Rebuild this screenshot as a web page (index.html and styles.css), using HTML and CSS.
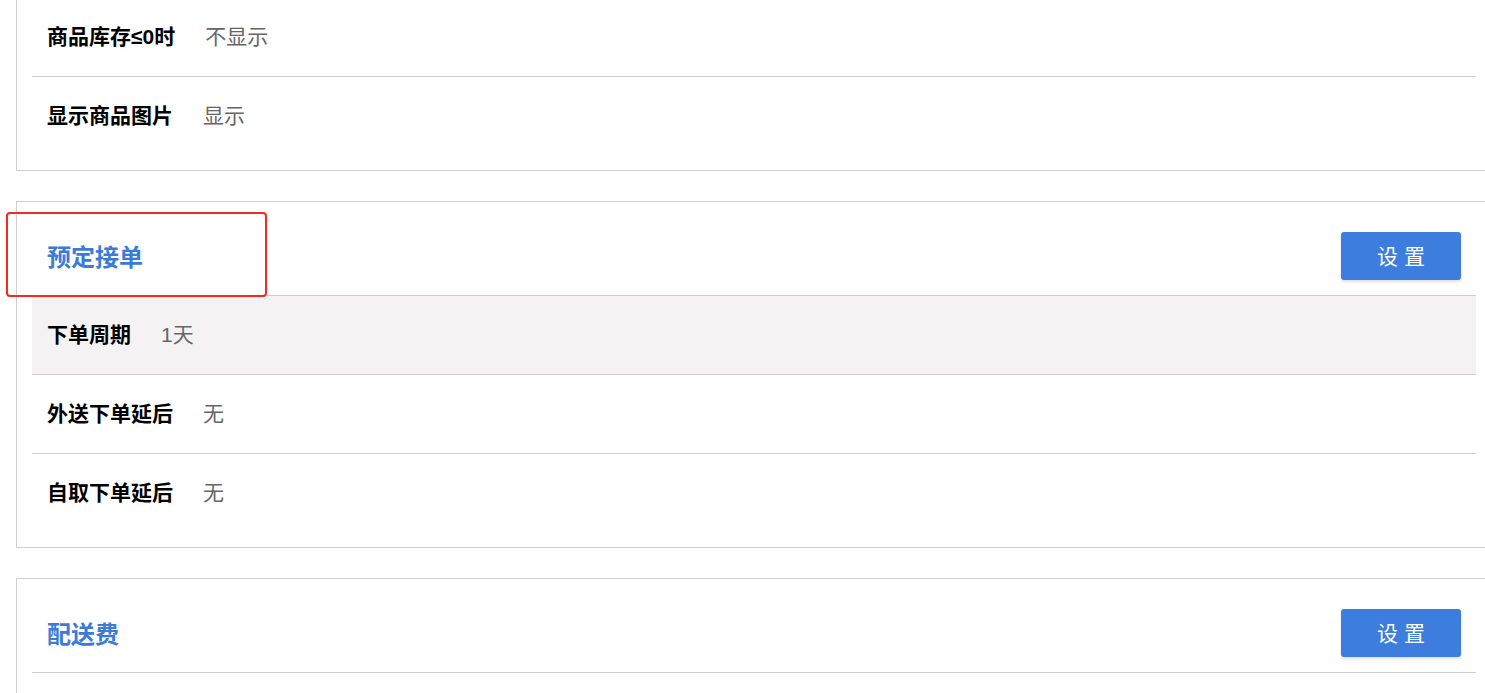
FILE: index.html
```html
<!DOCTYPE html>
<html><head>
<meta charset="utf-8">
<title>店铺设置</title>
<link rel="stylesheet" href="styles.css">
</head>
<body>
<div class="page">
	<div class="card cut">
		<div class="row"><span class="label">商品库存≤0时</span><span class="value">不显示</span></div>
		<div class="row"><span class="label">显示商品图片</span><span class="value">显示</span></div>
	</div>

	<div class="card">
		<div class="mark"></div>
		<div class="head">
			<span class="title">预定接单</span>
			<button class="btn">设置</button>
		</div>
		<div class="row grey"><span class="label">下单周期</span><span class="value">1天</span></div>
		<div class="row"><span class="label">外送下单延后</span><span class="value">无</span></div>
		<div class="row"><span class="label">自取下单延后</span><span class="value">无</span></div>
	</div>

	<div class="card">
		<div class="head">
			<span class="title">配送费</span>
			<button class="btn">设置</button>
		</div>
		<div class="row"></div>
	</div>
</div>
</body>
</html>
```

FILE: styles.css
```css
body {
    margin: 0;
    background: #fff;
    font-family: "Liberation Sans", "Noto Sans CJK SC", sans-serif;
    overflow: hidden;
}
.page {
    padding: 0 0 0 16px;
    width: 1476px;
}
.card {
    position: relative;
    border: 1px solid #cfcfcf;
    padding: 15px;
    margin-bottom: 30px;
    background: #fff;
}
/* верх первой карточки уехал за край экрана */
.card.cut {
    border-top: none;
    padding-top: 0;
    margin-top: -2px;
}
.head {
    display: flex;
    align-items: center;
    justify-content: space-between;
    padding: 15px;
    border-bottom: 1px solid #cfcfcf;
}
.title {
    font-size: 24px;
    font-weight: bold;
    color: #3b7bd8;
    padding-bottom: 2px;
}
.btn {
    width: 120px;
    height: 48px;
    padding: 0 0 3px 6px;
    border: none;
    border-radius: 3px;
    background: #3c7ddd;
    color: #fff;
    font-family: inherit;
    font-size: 21px;
    letter-spacing: 6px;
    box-shadow: 0 2px 3px rgba(0,0,0,.12);
    cursor: pointer;
}
.row {
    display: flex;
    align-items: center;
    height: 74px;
    padding: 0 15px 4px;
    border-bottom: 1px solid #cfcfcf;
    font-size: 21px;
}
.row:last-child { border-bottom: none; }
.row.grey { background: #f4f2f2; }
.label {
    font-weight: bold;
    color: #000;
    margin-right: 30px;
}
.value { color: #666; }
.mark {
    position: absolute;
    left: -11px;
    top: 10px;
    width: 257px;
    height: 81px;
    border: 2px solid #f42a22;
    border-radius: 4px;
    z-index: 5;
}
```
